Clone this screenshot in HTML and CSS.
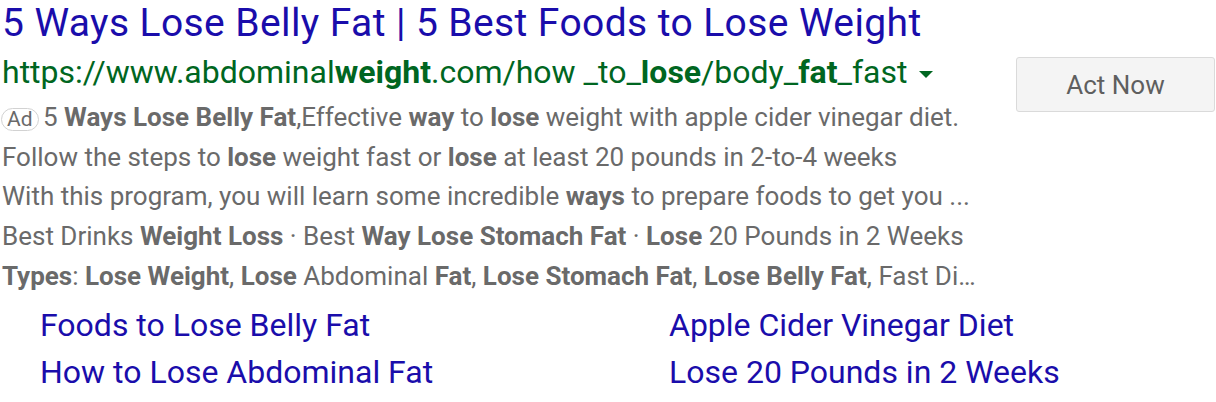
FILE: index.html
```html
<!DOCTYPE html>
<html>
<head>
<meta charset="utf-8">
<link rel="stylesheet" href="styles.css">
</head>
<body>
<div class="ad">
  <div class="main">
    <a class="title" href="#">5 Ways Lose Belly Fat | 5 Best Foods to Lose Weight</a>
    <div class="url">https://www.abdominal<b>weight</b>.com/how _to_<b>lose</b>/body_<b>fat</b>_fast <span class="caret"></span></div>
    <div class="desc">
      <div class="line"><span class="badge">Ad</span> 5 <b>Ways Lose Belly Fat</b>,Effective <b>way</b> to <b>lose</b> weight with apple cider vinegar diet.</div>
      <div class="line">Follow the steps to <b>lose</b> weight fast or <b>lose</b> at least 20 pounds in 2-to-4 weeks</div>
      <div class="line">With this program, you will learn some incredible <b>ways</b> to prepare foods to get you ...</div>
      <div class="line">Best Drinks <b>Weight Loss</b> · Best <b>Way Lose Stomach Fat</b> · <b>Lose</b> 20 Pounds in 2 Weeks</div>
      <div class="line"><b>Types</b>: <b>Lose Weight</b>, <b>Lose</b> Abdominal <b>Fat</b>, <b>Lose Stomach Fat</b>, <b>Lose Belly Fat</b>, Fast Di…</div>
    </div>
    <div class="sitelinks">
      <a href="#">Foods to Lose Belly Fat</a>
      <a href="#">Apple Cider Vinegar Diet</a>
      <a href="#">How to Lose Abdominal Fat</a>
      <a href="#">Lose 20 Pounds in 2 Weeks</a>
    </div>
  </div>
  <div class="side">
    <button class="act">Act Now</button>
  </div>
</div>
</body>
</html>
```
FILE: styles.css
```css
html, body {
  margin: 0;
  padding: 0;
  background: #fff;
}
body {
  font-family: Roboto, "Noto Sans", Arial, sans-serif;
}
.ad {
  display: flex;
  width: 1216px;
}
.main {
  flex: 1 1 0;
  min-width: 0;
  padding-left: 2px;
}
.title {
  display: block;
  font-size: 39px;
  letter-spacing: 0.4px;
  line-height: 46px;
  color: #1a0dab;
  text-decoration: none;
  white-space: nowrap;
}
.url {
  font-size: 32px;
  line-height: 52px;
  color: #006621;
  white-space: nowrap;
}
.url b {
  font-weight: 700;
}
.caret {
  display: inline-block;
  width: 0;
  height: 0;
  border-left: 7px solid transparent;
  border-right: 7px solid transparent;
  border-top: 7px solid #006621;
  vertical-align: middle;
  margin-left: 4px;
}
.desc {
  font-size: 26px;
  line-height: 39.7px;
  color: #6a6a6a;
}
.desc b {
  font-weight: 700;
}
.line {
  white-space: nowrap;
}
.badge {
  display: inline-block;
  font-size: 21px;
  line-height: 21px;
  padding: 0 5px;
  border: 1px solid #d2d2d2;
  border-radius: 12px;
  color: #6a6a6a;
  vertical-align: middle;
  margin-left: -1px;
  margin-right: -2px;
}
.sitelinks {
  display: grid;
  grid-template-columns: 629px auto;
  padding-left: 38px;
  font-size: 32px;
  line-height: 47px;
  margin-top: 5px;
}
.sitelinks a {
  color: #1a0dab;
  text-decoration: none;
  white-space: nowrap;
}
.side {
  flex: 0 0 200px;
  padding-top: 57px;
}
.act {
  display: block;
  width: 199px;
  height: 55px;
  background: #f4f4f4;
  border: 1px solid #dadada;
  border-radius: 3px;
  font-family: Roboto, Arial, sans-serif;
  font-size: 26px;
  color: #5f5f5f;
  padding: 0;
}
```
